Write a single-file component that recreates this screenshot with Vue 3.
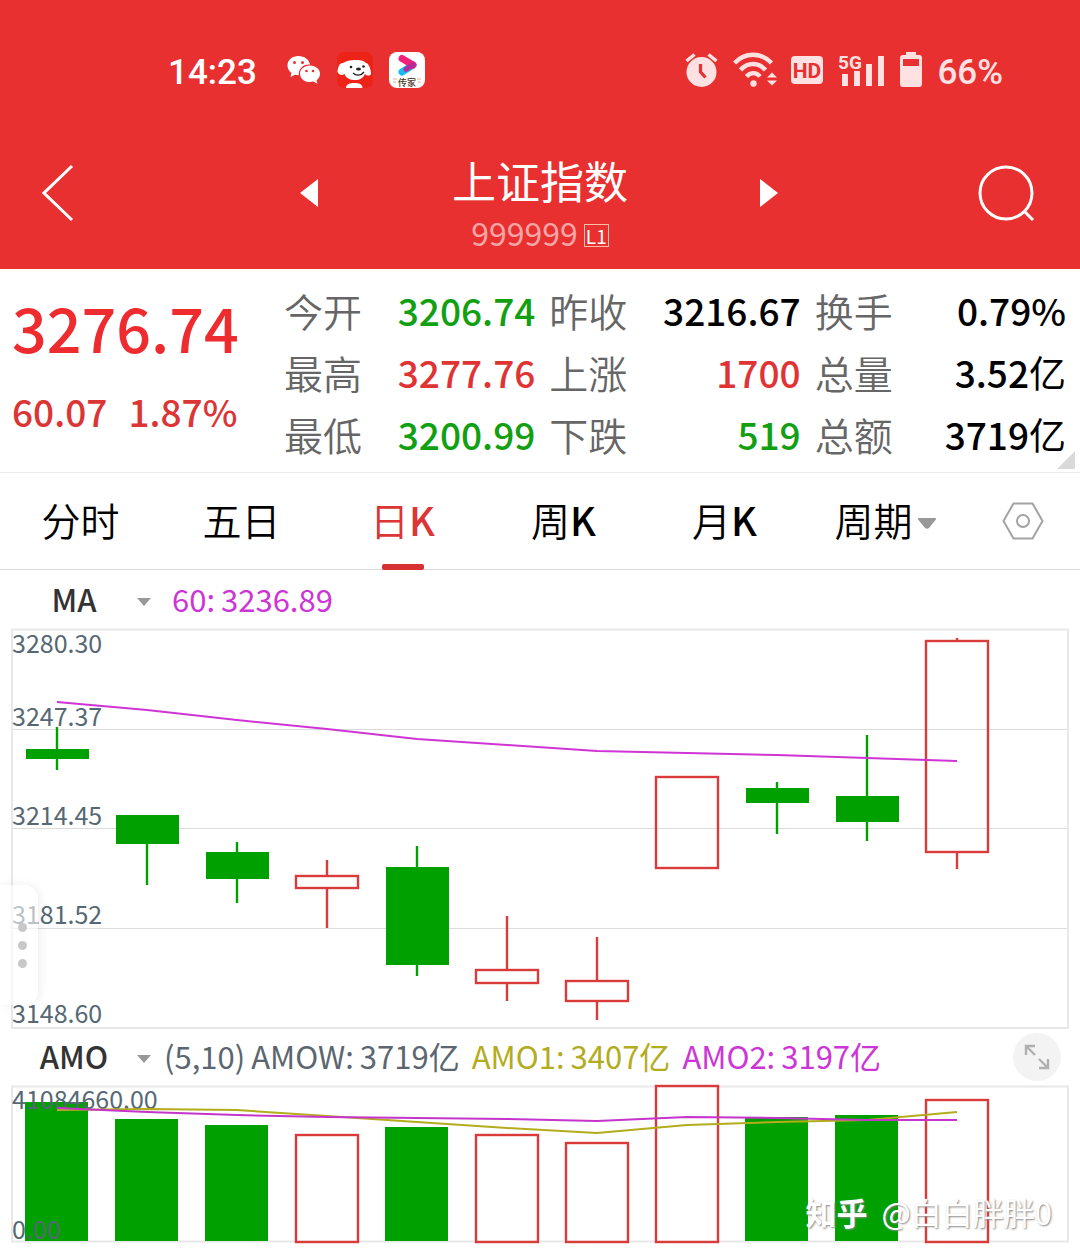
<script setup>
import { ref } from 'vue'

const quotes = [
  { label: '今开', value: '3206.74', tone: 'down' },
  { label: '昨收', value: '3216.67', tone: 'flat' },
  { label: '换手', value: '0.79%', tone: 'flat' },
  { label: '最高', value: '3277.76', tone: 'up' },
  { label: '上涨', value: '1700', tone: 'up' },
  { label: '总量', value: '3.52', unit: '亿', tone: 'flat' },
  { label: '最低', value: '3200.99', tone: 'down' },
  { label: '下跌', value: '519', tone: 'down' },
  { label: '总额', value: '3719', unit: '亿', tone: 'flat' },
]

const tabs = [
  { cjk: '分时', latin: '' },
  { cjk: '五日', latin: '' },
  { cjk: '日', latin: 'K' },
  { cjk: '周', latin: 'K' },
  { cjk: '月', latin: 'K' },
]
const activeTab = ref(2)

const centerX = (i) => 57 + i * 90

// Vertical chart coordinates: wick top, body top, body bottom, wick bottom
const candles = [
  { up: false, high: 99, top: 121, bottom: 131, low: 142 },
  { up: false, high: 187, top: 187, bottom: 216, low: 257 },
  { up: false, high: 214, top: 224, bottom: 251, low: 275 },
  { up: true, high: 232, top: 247, bottom: 261, low: 300 },
  { up: false, high: 218, top: 239, bottom: 337, low: 348 },
  { up: true, high: 288, top: 341, bottom: 356, low: 373 },
  { up: true, high: 309, top: 352, bottom: 374, low: 392 },
  { up: true, high: 148, top: 148, bottom: 241, low: 241 },
  { up: false, high: 154, top: 160, bottom: 175, low: 206 },
  { up: false, high: 107, top: 168, bottom: 194, low: 213 },
  { up: true, high: 10, top: 12, bottom: 225, low: 241 },
]
const ma60 = [74, 82, 92, 101, 111, 117, 123, 125, 127, 130, 133]

const priceLabels = [
  { text: '3280.30', y: 25 },
  { text: '3247.37', y: 98 },
  { text: '3214.45', y: 197 },
  { text: '3181.52', y: 296 },
  { text: '3148.60', y: 395 },
]

const volumes = [17, 34, 40, 49, 42, 49, 57, 0, 32, 30, 14]
const amo1 = [25, 24, 25, 31, 37, 43, 48, 40, 37, 35, 27]
const amo2 = [23, 27, 30, 32, 33, 34, 36, 32, 33, 35, 35]

const toPoints = (ys) => ys.map((y, i) => `${centerX(i)},${y}`).join(' ')
</script>

<template>
  <main class="app">
    <div class="top">
      <div class="status">
        <div class="status-left">
          <span class="time">14:23</span>
          <svg class="ic-wechat" width="34" height="30" viewBox="0 0 34 30">
            <path fill="#fff" d="M11.500 1C5 1 .5 5 .5 10.500c0 3 1.500 5.700 4 7.500L3.500 22l4.500-2.300c1.200.3 2.400.5 3.800.5C11.300 14 16 9 23 9.500 22 4.500 17.500 1 11.500 1Z" />
            <path fill="#fff" d="M23 10.500c-5.700 0-10 3.600-10 8.300s4.300 8.300 10 8.300c1.200 0 2.400-.2 3.500-.5l4 2.200-1-3.400c2.200-1.600 3.500-3.900 3.500-6.600 0-4.700-4.300-8.300-10-8.300Z" />
            <g fill="#e83030"><circle cx="7.500" cy="7.500" r="1.500" /><circle cx="15.500" cy="7.500" r="1.500" /><circle cx="19.500" cy="16" r="1.300" /><circle cx="26" cy="16" r="1.300" /></g>
          </svg>
          <svg class="ic-dog" width="36" height="36" viewBox="0 0 36 36">
            <rect width="36" height="36" rx="7" fill="#ee2318" />
            <path fill="#fff" d="M6 11C9 9 13 8 18 8s8 0 11 3c3 0 5 7 5 11-1 2-4 2-6 0-2 4-5 6-10 6S9 26 7.500 22C5 24 2 23 .5 20 1 15 2 11 6 11ZM9 36c0-4 4-5 8.500-5s8 1 8 5Z" />
            <ellipse cx="21.500" cy="17" rx="2.500" ry="1.500" fill="#222" />
            <circle cx="14" cy="15" r="1.300" fill="#222" /><circle cx="26.500" cy="14.500" r="1.300" fill="#222" />
            <path d="M16 21c3 3 8 3 11-1" fill="none" stroke="#222" stroke-width="1.300" />
          </svg>
          <svg class="ic-video" width="36" height="36" viewBox="0 0 36 36">
            <rect width="36" height="36" rx="8" fill="#fff" />
            <path d="M13 20 24 13" stroke="#16b9f2" stroke-width="7" stroke-linecap="round" />
            <path d="M13 6.500 24 13" stroke="#f0217b" stroke-width="7" stroke-linecap="round" />
            <path d="m24 13-7 4.300" stroke="#b52a9a" stroke-width="5" stroke-linecap="round" />
            <text x="18" y="34" text-anchor="middle" font-size="9" font-weight="500" fill="#4a3020">传家</text>
            <path d="M4 27h4M4 30h3M28 27h4M29 30h3" stroke="#d9b48c" stroke-width="1" />
          </svg>
        </div>
        <div class="status-right">
          <svg width="34" height="36" viewBox="0 0 34 36" fill="none">
            <circle cx="16.500" cy="20" r="15" fill="#ffe1e1" />
            <path d="m1.500 9 8-6.500M31.500 9l-8-6.500" stroke="#ffe1e1" stroke-width="3.500" />
            <path d="M15.500 12v8l5 5.500" stroke="#e83030" stroke-width="3.200" />
          </svg>
          <svg width="44" height="36" viewBox="0 0 44 36" fill="none" stroke="#ffe1e1" stroke-width="4.400">
            <path d="M1.500 11C12 0 28 0 38.500 11M7.500 18c7-8 18-8 25 0M13.500 24.500c4-4.500 10-4.500 13.500 0" />
            <circle cx="20.500" cy="31.500" r="3.200" fill="#ffe1e1" stroke="none" />
            <path d="m34 25.500 5-5 5 5ZM34 28.500l5 5 5-5Z" fill="#ffe1e1" stroke="none" />
          </svg>
          <svg width="32" height="28" viewBox="0 0 32 28">
            <rect width="32" height="28" rx="4" fill="#ffe1e1" />
            <text class="hd" x="16" y="22" text-anchor="middle">HD</text>
          </svg>
          <svg width="48" height="34" viewBox="0 0 48 34">
            <text class="five-g" x="1" y="16">5G</text>
            <path fill="#ffe1e1" d="M5 21h6v12H5ZM17 18h6v15h-6ZM29 11h6v22h-6ZM41 3h6v30h-6Z" />
          </svg>
          <svg width="24" height="36" viewBox="0 0 24 36">
            <path fill="#ffe1e1" fill-rule="evenodd" d="M7 0h10v3h3q3 0 3 3v26q0 3-3 3H4q-3 0-3-3V6q0-3 3-3h3ZM4 7v7h16V7Z" />
          </svg>
          <span class="percent">66%</span>
        </div>
      </div>

      <header class="header">
        <button class="icon-btn" aria-label="返回">
          <svg width="34" height="58" viewBox="0 0 34 58"><path d="M30 2 2 29l28 27" fill="none" stroke="#fff" stroke-width="3" /></svg>
        </button>
        <div class="switcher">
          <button class="icon-btn" aria-label="上一个">
            <svg width="20" height="28" viewBox="0 0 20 28"><path d="M18 0v28L0 14Z" fill="#fff" /></svg>
          </button>
          <div class="title">
            <h1>上证指数</h1>
            <p><span>999999</span><b>L1</b></p>
          </div>
          <button class="icon-btn" aria-label="下一个">
            <svg width="20" height="28" viewBox="0 0 20 28"><path d="M0 0v28l18-14Z" fill="#fff" /></svg>
          </button>
        </div>
        <button class="icon-btn search" aria-label="搜索">
          <svg width="62" height="60" viewBox="0 0 62 60" fill="none" stroke="#fff" stroke-width="3"><circle cx="30" cy="30" r="26" /><path d="m48 48 9 9" /></svg>
        </button>
      </header>
    </div>

    <section class="quote">
      <div class="main-quote">
        <strong>3276.74</strong>
        <p><span>60.07</span><span>1.87%</span></p>
      </div>
      <dl>
        <div v-for="q in quotes" :key="q.label">
          <dt>{{ q.label }}</dt>
          <dd :class="q.tone">{{ q.value }}<span v-if="q.unit">{{ q.unit }}</span></dd>
        </div>
      </dl>
      <svg class="corner" width="18" height="18" viewBox="0 0 18 18"><path d="M18 0v18H0Z" fill="#dadada" /></svg>
    </section>

    <nav class="tabs">
      <button
        v-for="(t, i) in tabs"
        :key="t.cjk"
        class="tab"
        :class="{ active: i === activeTab }"
        @click="activeTab = i"
      >{{ t.cjk }}<b v-if="t.latin">{{ t.latin }}</b></button>
      <button class="tab">
        周期<svg width="20" height="12" viewBox="0 0 20 12"><path d="M2 1h16q2 0 .5 2L12 11q-2 1.500-4 0L1.500 3Q0 1 2 1Z" fill="#999" /></svg>
      </button>
      <button class="settings" aria-label="设置">
        <svg width="42" height="38" viewBox="0 0 42 38" fill="none" stroke="#a3a3a3" stroke-width="2"><path d="M11.500 1.500h19L40.500 19l-10 17.500h-19L1.500 19Z" /><circle cx="21" cy="19" r="6" /></svg>
      </button>
    </nav>

    <div class="indicator">
      <label class="picker">
        <select aria-label="主图指标"><option>MA</option></select>
        <svg width="16" height="10" viewBox="0 0 16 10"><path d="M1 1h14L8 9Z" fill="#999" /></svg>
      </label>
      <div class="readout magenta ma-readout"><span>60:</span><span>3236.89</span></div>
    </div>

    <div class="price-chart">
      <svg class="chart" viewBox="0 0 1080 401">
        <g stroke="#dcdcdc">
          <path d="M12 101.500H1068M12 200.500H1068M12 300.500H1068" />
          <rect x="12" y="1.500" width="1056" height="398.500" fill="none" stroke="#e8e8e8" stroke-width="2" />
        </g>
        <text v-for="l in priceLabels" :key="l.text" x="12" :y="l.y">{{ l.text }}</text>
        <g v-for="(c, i) in candles" :key="i" stroke-width="2.400" :stroke="c.up ? '#d93a3a' : '#00a000'">
          <path :d="`M${centerX(i)} ${c.high}V${c.top}M${centerX(i)} ${c.bottom}V${c.low}`" />
          <rect v-if="c.up" :x="centerX(i) - 31" :y="c.top + 1" width="62" :height="c.bottom - c.top - 2" fill="none" />
          <rect v-else :x="centerX(i) - 31" :y="c.top" width="63" :height="c.bottom - c.top" fill="#00a000" stroke="none" />
        </g>
        <polyline :points="toPoints(ma60)" fill="none" stroke="#cf35d4" stroke-width="2" />
      </svg>
      <button class="handle" aria-label="更多"><i></i><i></i><i></i></button>
    </div>

    <div class="indicator amo">
      <label class="picker">
        <select aria-label="副图指标"><option>AMO</option></select>
        <svg width="16" height="10" viewBox="0 0 16 10"><path d="M1 1h14L8 9Z" fill="#999" /></svg>
      </label>
      <div class="readout slate"><span>(5,10)</span><span>AMOW:</span><span>3719亿</span></div>
      <div class="readout olive"><span>AMO1:</span><span>3407亿</span></div>
      <div class="readout magenta"><span>AMO2:</span><span>3197亿</span></div>
      <button class="expand" aria-label="全屏">
        <svg width="26" height="26" viewBox="0 0 26 26" fill="none" stroke="#b0b0b0" stroke-width="2.400"><path d="M2 11V2h9M2 2l9 9M24 15v9h-9M24 24l-9-9" /></svg>
      </button>
    </div>

    <div class="volume-chart">
      <svg class="chart" viewBox="0 0 1080 159">
        <rect x="12" y="1.500" width="1056" height="155" fill="none" stroke="#e8e8e8" stroke-width="2" />
        <template v-for="(v, i) in volumes" :key="i">
          <rect v-if="candles[i].up" :x="centerX(i) - 31" :y="v + 1" width="62" :height="156 - v" fill="none" stroke="#d93a3a" stroke-width="2.400" />
          <rect v-else :x="centerX(i) - 32" :y="v" width="63" :height="156 - v" fill="#00a000" />
        </template>
        <text x="12" y="24">41084660.00</text>
        <text x="12" y="154">0.00</text>
        <polyline :points="toPoints(amo1)" fill="none" stroke="#b3ac1c" stroke-width="2" />
        <polyline :points="toPoints(amo2)" fill="none" stroke="#c535cc" stroke-width="2" />
      </svg>
      <div class="watermark"><b>知乎</b><span>@白白胖胖0</span></div>
    </div>
  </main>
</template>

<style>
body {
  margin: 0;
  background: #fff;
}
</style>

<style scoped>
.app {
  font-family: "Noto Sans CJK SC", "Noto Sans", sans-serif;
  color: #000;
  padding-bottom: 15px;
}
button {
  border: 0;
  padding: 0;
  background: none;
  font: inherit;
  color: inherit;
}
svg {
  display: block;
  flex: none;
}
p, h1, dl, dd {
  margin: 0;
}
.top {
  background: #e83030;
  color: #fff;
}
.status {
  display: flex;
  justify-content: space-between;
  padding: 48px 77px 0 168px;
  font-family: Roboto, sans-serif;
  font-weight: 500;
  font-size: 35px;
}
.status-left,
.status-right {
  display: flex;
  align-items: center;
  height: 44px;
}
.time,
.percent {
  padding-top: 4px;
}
.time {
  margin-right: 30px;
}
.ic-wechat,
.ic-dog {
  margin-right: 16px;
}
.ic-video {
  font-family: "Noto Sans CJK SC", sans-serif;
}
.status-right {
  gap: 14px;
  color: #ffe1e1;
}
.hd {
  font: 700 21px Roboto, sans-serif;
  fill: #e83030;
}
.five-g {
  font: 700 19px Roboto, sans-serif;
  fill: #ffe1e1;
}
.header {
  display: grid;
  grid-template-columns: 1fr 480px 1fr;
  align-items: center;
  padding: 60px 42px 12px;
}
.icon-btn {
  justify-self: start;
  padding-bottom: 24px;
}
.search {
  justify-self: end;
}
.switcher {
  display: flex;
  align-items: center;
  justify-content: space-between;
}
.title {
  text-align: center;
}
.title h1 {
  font-size: 44px;
  line-height: 56px;
  font-weight: 400;
}
.title p {
  display: flex;
  align-items: center;
  justify-content: center;
  gap: 6px;
  font-size: 32px;
  line-height: 49px;
  color: #f9a5a5;
}
.title b {
  margin-top: 6px;
  padding: 0 1px;
  border: 1px solid #f8c0a8;
  color: #fff;
  font-size: 19px;
  line-height: 21px;
  font-weight: 400;
}
.quote {
  position: relative;
  display: flex;
  padding: 10px 0 7px;
  border-bottom: 1px solid #ececec;
}
.main-quote {
  width: 272px;
  padding-left: 12px;
  color: #ee2c2f;
  font-weight: 500;
}
.main-quote strong {
  display: block;
  margin-top: 8px;
  font-size: 61px;
  line-height: 80px;
  font-weight: 500;
}
.main-quote p {
  display: flex;
  gap: 21px;
  font-size: 37px;
  line-height: 88px;
  color: #dc3535;
}
.quote dl {
  flex: 1;
  display: grid;
  grid-template-columns: repeat(3, 1fr);
}
.quote dl div {
  display: flex;
  justify-content: space-between;
  padding-right: 14px;
  font-size: 39px;
  line-height: 62px;
}
.quote dt {
  color: #666;
  font-weight: 350;
}
.quote dd {
  font-size: 37px;
  font-weight: 500;
}
.quote dd span {
  font-weight: 400;
}
.up {
  color: #e03434;
}
.down {
  color: #12a012;
}
.corner {
  position: absolute;
  right: 5px;
  bottom: 3px;
}
.tabs {
  display: flex;
  height: 96px;
  border-bottom: 1px solid #dcdcdc;
}
.tab {
  position: relative;
  flex: 1;
  display: flex;
  align-items: center;
  justify-content: center;
  padding-bottom: 5px;
  font-size: 39px;
  font-weight: 350;
  white-space: nowrap;
}
.tab b {
  font-weight: 500;
}
.tab svg {
  margin: 8px 0 0 4px;
}
.tab.active {
  color: #dc3535;
}
.tab.active::after {
  content: "";
  position: absolute;
  left: 50%;
  bottom: -1px;
  width: 42px;
  height: 6px;
  margin-left: -21px;
  border-radius: 2px;
  background: #d63232;
}
.settings {
  width: 114px;
  display: flex;
  align-items: center;
  justify-content: center;
}
.indicator {
  display: flex;
  align-items: center;
  height: 58px;
  padding: 2px 19px 0 12px;
  box-sizing: border-box;
  font-size: 31px;
}
.amo {
  height: 56px;
  padding-top: 0;
  gap: 12px;
}
.picker {
  display: flex;
  align-items: center;
}
.picker svg {
  margin-top: 3px;
}
.picker select {
  appearance: none;
  width: 124px;
  border: 0;
  padding: 0 0 4px;
  background: none;
  font: inherit;
  font-weight: 500;
  color: #333;
  text-align: center;
  text-align-last: center;
}
.readout {
  display: flex;
  gap: 6px;
  padding-bottom: 4px;
  white-space: nowrap;
}
.ma-readout {
  margin-left: 20px;
}
.magenta {
  color: #cc35d6;
}
.olive {
  color: #b3ac1c;
}
.slate {
  color: #5b6670;
}
.expand {
  display: flex;
  align-items: center;
  justify-content: center;
  width: 48px;
  height: 48px;
  margin-left: auto;
  border-radius: 50%;
  background: #f3f3f3;
}
.chart {
  width: 100%;
  height: auto;
  overflow: visible;
}
.chart text {
  font-size: 25px;
  fill: #566873;
}
.price-chart,
.volume-chart {
  position: relative;
}
.handle {
  position: absolute;
  left: 0;
  top: 257px;
  display: flex;
  flex-direction: column;
  align-items: center;
  justify-content: center;
  gap: 9px;
  width: 38px;
  height: 120px;
  padding-left: 7px;
  border-radius: 0 14px 14px 0;
  background: rgba(255, 255, 255, 0.6);
  box-shadow: 2px 0 10px rgba(0, 0, 0, 0.07);
}
.handle i {
  width: 9px;
  height: 9px;
  border-radius: 50%;
  background: #c8c8c8;
}
.watermark {
  position: absolute;
  right: 28px;
  bottom: 10px;
  display: flex;
  gap: 14px;
  font-size: 31px;
  line-height: 44px;
  color: #fff;
  text-shadow: 1px 1px 2px #888;
}
</style>
